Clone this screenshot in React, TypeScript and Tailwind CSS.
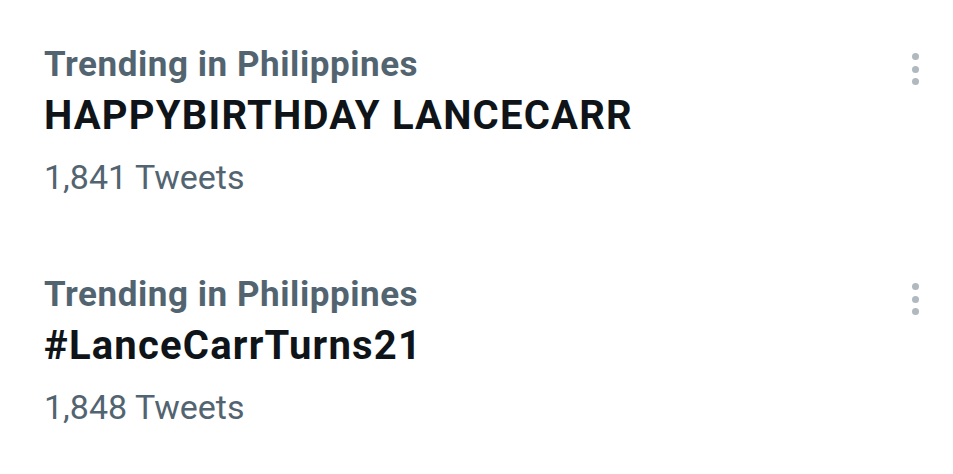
const trends = [
  { place: "Trending in Philippines", topic: "HAPPYBIRTHDAY LANCECARR", count: "1,841 Tweets" },
  { place: "Trending in Philippines", topic: "#LanceCarrTurns21", count: "1,848 Tweets" },
];

const MoreDots = () => (
  <div className="flex flex-col items-center gap-[5.5px] pt-[8px]">
    <span className="block w-[7px] h-[7px] rounded-full bg-[#b0b9c0]" />
    <span className="block w-[7px] h-[7px] rounded-full bg-[#b0b9c0]" />
    <span className="block w-[7px] h-[7px] rounded-full bg-[#b0b9c0]" />
  </div>
);

const App = () => {
  return (
    <div className="w-[953px] h-[474px] bg-white overflow-hidden font-['Roboto',sans-serif]">
      <div className="flex flex-col gap-[68px] pt-[45px] pl-[44px] pr-[34px]">
        {trends.map((t, i) => (
          <div key={i} className="flex justify-between">
            <div className="flex flex-col">
              <p className="text-[35px] leading-[40px] font-bold tracking-[0.55px] text-[#536471]">{t.place}</p>
              <p className="text-[40px] leading-[62px] font-bold tracking-[1.2px] text-[#0f1419]">{t.topic}</p>
              <p className="text-[34px] leading-[60px] text-[#536471]">{t.count}</p>
            </div>
            <MoreDots />
          </div>
        ))}
      </div>
    </div>
  );
};

export default App;
